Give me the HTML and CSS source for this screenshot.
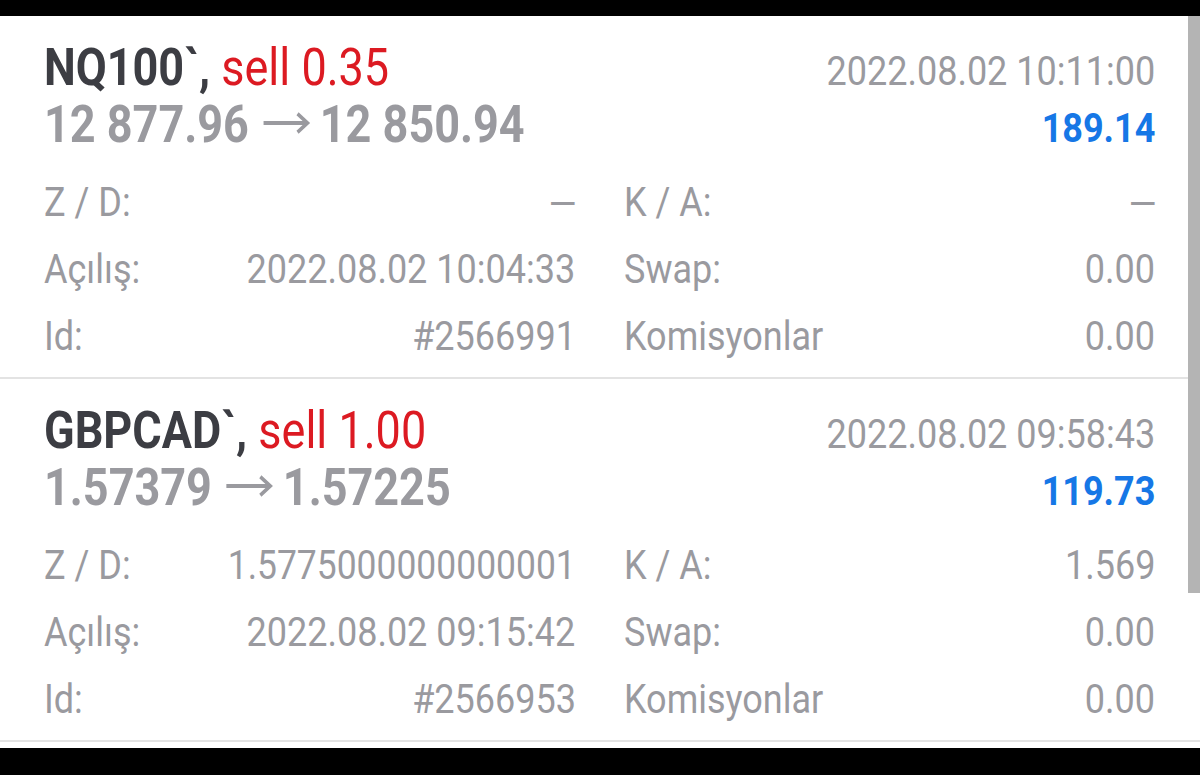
FILE: index.html
```html
<!DOCTYPE html>
<html lang="tr">
<head>
<meta charset="utf-8">
<title>Deals</title>
<link rel="stylesheet" href="styles.css">
</head>
<body>
<div class="screen">
  <div class="topbar"></div>
  <div class="list">
    <div class="deal">
      <div class="line1">
        <span class="c l title"><b>NQ100`,</b> <span class="sell">sell 0.35</span></span>
        <span class="c r date">2022.08.02 10:11:00</span>
      </div>
      <div class="line2">
        <span class="c l price">12 877.96<svg class="arrow" viewBox="0 0 50 22" role="img" aria-label="→"><path d="M1 11H47M37 2.5L47.5 11L37 19.5"/></svg>12 850.94</span>
        <span class="c r profit">189.14</span>
      </div>
      <div class="grid">
        <div class="cell"><span class="c l">Z / D:</span><span class="c r dash">–</span></div>
        <div class="cell"><span class="c l">K / A:</span><span class="c r dash">–</span></div>
        <div class="cell"><span class="c l">Açılış:</span><span class="c r">2022.08.02 10:04:33</span></div>
        <div class="cell"><span class="c l">Swap:</span><span class="c r">0.00</span></div>
        <div class="cell"><span class="c l">Id:</span><span class="c r">#2566991</span></div>
        <div class="cell"><span class="c l">Komisyonlar</span><span class="c r">0.00</span></div>
      </div>
    </div>
    <div class="deal">
      <div class="line1">
        <span class="c l title"><b>GBPCAD`,</b> <span class="sell">sell 1.00</span></span>
        <span class="c r date">2022.08.02 09:58:43</span>
      </div>
      <div class="line2">
        <span class="c l price">1.57379<svg class="arrow" viewBox="0 0 50 22" role="img" aria-label="→"><path d="M1 11H47M37 2.5L47.5 11L37 19.5"/></svg>1.57225</span>
        <span class="c r profit">119.73</span>
      </div>
      <div class="grid">
        <div class="cell"><span class="c l">Z / D:</span><span class="c r tight">1.5775000000000001</span></div>
        <div class="cell"><span class="c l">K / A:</span><span class="c r">1.569</span></div>
        <div class="cell"><span class="c l">Açılış:</span><span class="c r">2022.08.02 09:15:42</span></div>
        <div class="cell"><span class="c l">Swap:</span><span class="c r">0.00</span></div>
        <div class="cell"><span class="c l">Id:</span><span class="c r">#2566953</span></div>
        <div class="cell"><span class="c l">Komisyonlar</span><span class="c r">0.00</span></div>
      </div>
    </div>
  </div>
  <div class="scrollbar"></div>
  <div class="bottombar"></div>
</div>
</body>
</html>
```
FILE: styles.css
```css
* { box-sizing: border-box; }
html, body { margin: 0; padding: 0; }
body {
  background: #000;
  font-family: Roboto, "Noto Sans", sans-serif;
  color: #9a9a9f;
}
.screen {
  position: relative;
  width: 1200px;
  height: 775px;
  display: flex;
  flex-direction: column;
  overflow: hidden;
}
.topbar { height: 16px; background: #000; flex: none; }
.list {
  height: 732px;
  background: #fff;
  flex: none;
}
.bottombar { flex: 1; background: #000; }
.deal {
  height: 363px;
  border-bottom: 2px solid #e3e3e3;
  padding: 23px 45px 0 44px;
}
.c {
  display: inline-block;
  white-space: nowrap;
  transform: scaleX(0.9);
}
.l { transform-origin: 0 50%; }
.r { transform-origin: 100% 50%; }
.line1, .line2 {
  display: flex;
  justify-content: space-between;
  align-items: baseline;
  height: 57px;
}
.title, .price {
  font-size: 52px;
  line-height: 57px;
  font-weight: 700;
  transform: scaleX(0.865);
}
.title b { color: #3c3d43; font-weight: 700; }
.title .sell { color: #dc1a22; font-weight: 400; }
.price { color: #9a9a9f; }
.arrow {
  width: 56px;
  height: 24px;
  margin: 0 11px 0 15px;
  vertical-align: 7px;
  fill: none;
  stroke: #9a9a9f;
  stroke-width: 3.6;
}
.date {
  font-size: 40px;
  line-height: 57px;
  color: #9a9a9f;
}
.profit {
  font-size: 40px;
  line-height: 57px;
  font-weight: 700;
  color: #1677e6;
}
.grid {
  margin-top: 16px;
  display: grid;
  grid-template-columns: 1fr 1fr;
  column-gap: 48px;
}
.cell {
  display: flex;
  justify-content: space-between;
  align-items: baseline;
  height: 67px;
  font-size: 40px;
  line-height: 67px;
  color: #9a9a9f;
}
.dash { transform: scaleX(1.2) translate(3px, 2px); }
.tight { transform: scaleX(0.886); }
.scrollbar {
  position: absolute;
  top: 16px;
  right: 0;
  width: 12px;
  height: 577px;
  background: #b4b4b4;
}
```
